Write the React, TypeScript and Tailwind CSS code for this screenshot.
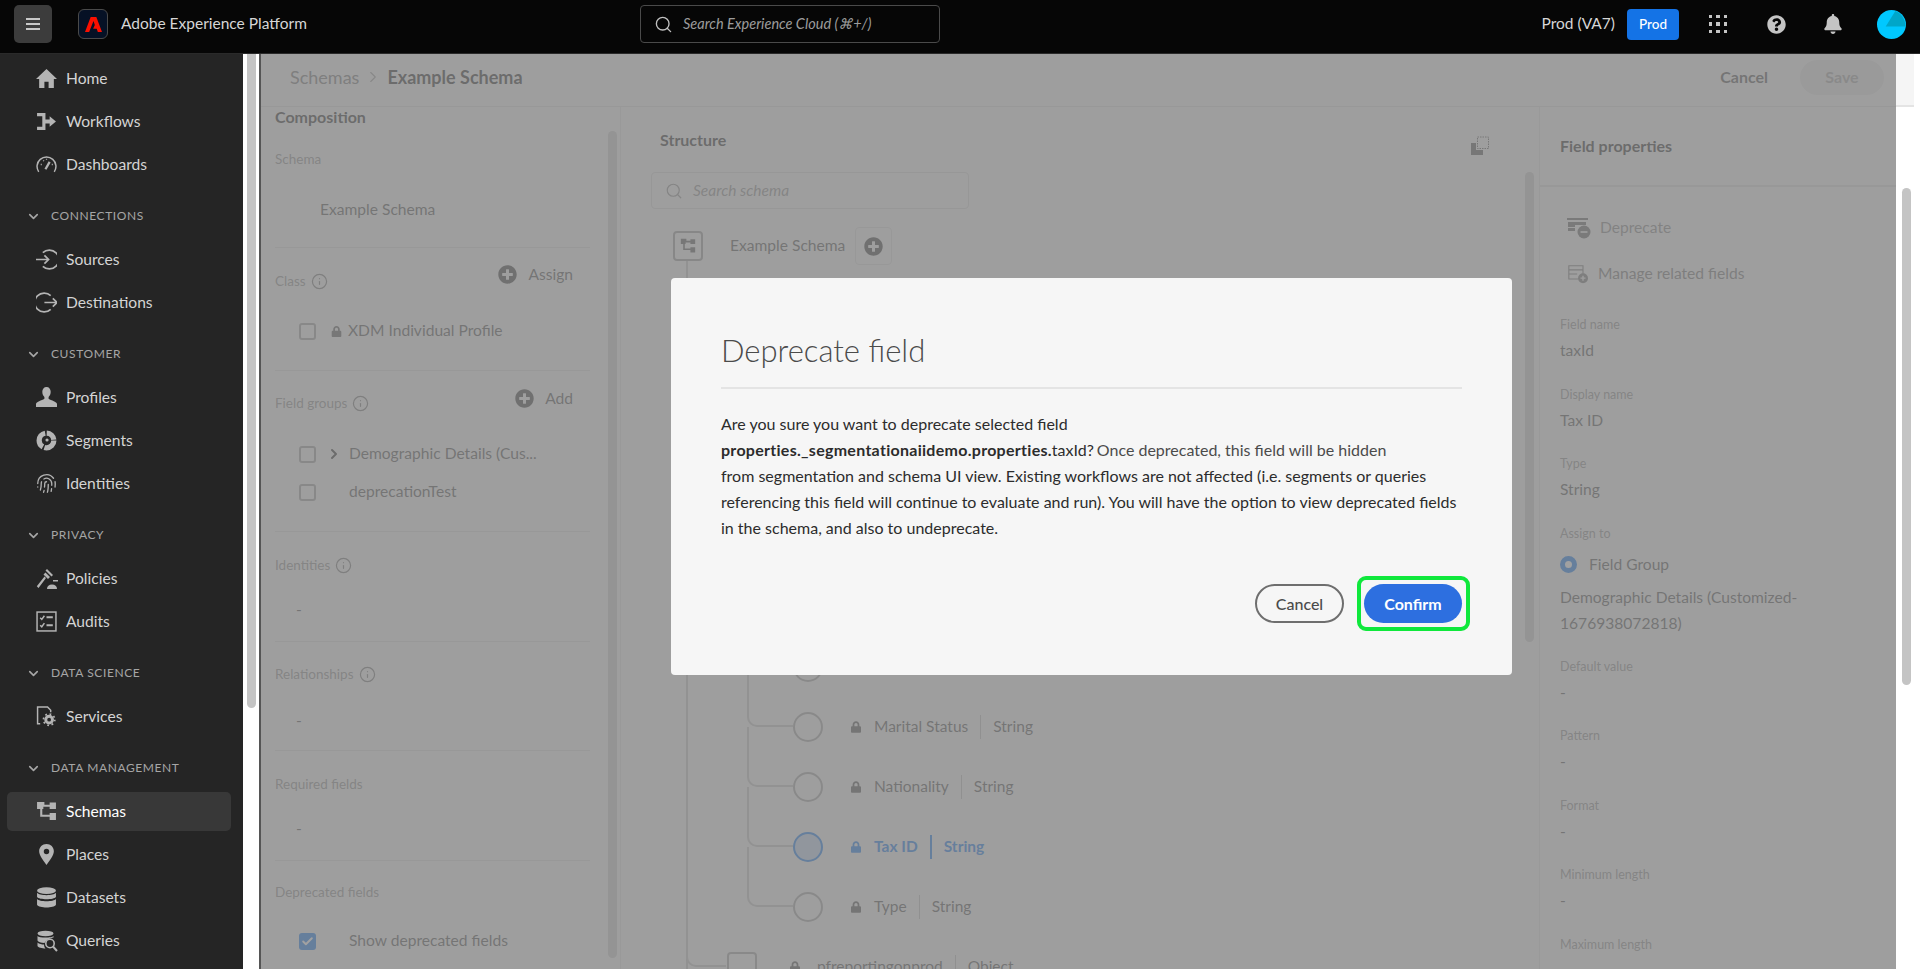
import { ChevronDown, ChevronRight, Check, Fingerprint, Info, Search } from "lucide-react";
import { FaBell, FaLock, FaPlusCircle, FaQuestionCircle } from "react-icons/fa";
import type { ReactNode } from "react";

const ic = "w-[21px] h-[21px] shrink-0";

const HomeIcon = () => (
  <svg viewBox="0 0 20 20" className={ic} fill="currentColor"><path d="M10 1 20 10.5H17V19H12V13H8V19H3V10.5H0Z" /></svg>
);
const WorkflowIcon = () => (
  <svg viewBox="0 0 20 20" className={ic} fill="currentColor"><path d="M1 2H9V8H13V5L19 10 13 15V12H9V18H1V15H6V5H1Z" /></svg>
);
const GaugeIcon = () => (
  <svg viewBox="0 0 20 20" className={ic} fill="none" stroke="currentColor" strokeWidth="1.4">
    <path d="M2.6 17A9 9 0 1 1 17.4 17" />
    <path d="M9 14.5 13 7.5" strokeWidth="2.2" />
    <path d="M4.5 10h1M7 6l.5.8M10 4.5v1M15 10h1" strokeWidth="1.2" />
  </svg>
);
const SourcesIcon = () => (
  <svg viewBox="0 0 20 20" className={ic} fill="none" stroke="currentColor" strokeWidth="1.6">
    <path d="M6.5 3.5A9 9 0 1 1 6.5 16.5" />
    <path d="M0 10H12M8 6l4 4-4 4" />
  </svg>
);
const DestIcon = () => (
  <svg viewBox="0 0 20 20" className={ic} fill="none" stroke="currentColor" strokeWidth="1.6">
    <path d="M14 3.5A9 9 0 1 0 14 16.5" />
    <path d="M8 10H20M16 6l4 4-4 4" />
  </svg>
);
const ProfileIcon = () => (
  <svg viewBox="0 0 20 20" className={ic} fill="currentColor">
    <path d="M10 0C7.5 0 6 2 6 4.6 6 7 7 8.6 8 9.6V11.2C8 12 1 13.4 0 16V19H20V16C19 13.4 12 12 12 11.2V9.6C13 8.6 14 7 14 4.6 14 2 12.5 0 10 0Z" />
  </svg>
);
const SegmentsIcon = () => (
  <svg viewBox="0 0 20 20" className={ic} fill="none" stroke="currentColor">
    <circle cx="10" cy="10" r="7" strokeWidth="5" strokeDasharray="13 1.5 17 1.5 10 1.5" />
    <circle cx="10.5" cy="9.5" r="1.5" fill="currentColor" strokeWidth="0" />
  </svg>
);
const PoliciesIcon = () => (
  <svg viewBox="0 0 22 22" className="w-[22px] h-[22px] shrink-0" fill="currentColor">
    <path d="M11 1 17 7 15.5 8.5 9.5 2.5ZM9.5 4.5 14 9 12 11 7.5 6.5ZM8.5 8.5 10 10 2.5 20 0.8 18.3Z" />
    <path d="M11 21C11 18 13 16.5 16 16.5S21 18 21 21ZM17 12h5v1.6h-5Z" />
  </svg>
);
const AuditsIcon = () => (
  <svg viewBox="0 0 20 20" className={ic} fill="none" stroke="currentColor" strokeWidth="1.4">
    <rect x="1" y="1" width="18" height="18" />
    <path d="M4 6.5 5.5 8 8 4.5M4 13.5 5.5 15 8 11.5" />
    <path d="M10 6h6M10 13.5h6" strokeWidth="2" />
  </svg>
);
const ServicesIcon = () => (
  <svg viewBox="0 0 20 20" className={ic} fill="none" stroke="currentColor" strokeWidth="1.4">
    <path d="M4 17H1.5V1H11L14 4V6" />
    <circle cx="12.5" cy="13" r="3.2" strokeWidth="2.8" />
    <circle cx="12.5" cy="13" r="5.4" strokeWidth="1.6" strokeDasharray="1.7 2.5" />
  </svg>
);
const SchemaIcon = ({ className = ic }: { className?: string }) => (
  <svg viewBox="0 0 20 20" className={className} fill="currentColor">
    <path d="M1 1H8V3.5H13V1.5H19V7.5H13V5.5H7V7.5H6V13H13V11.5H19V18H13V15H4V7.5H1Z" />
  </svg>
);
const PlacesIcon = () => (
  <svg viewBox="0 0 20 20" className={ic} fill="currentColor" fillRule="evenodd">
    <path d="M10 0C6 0 3 3 3 7 3 11 7 16 10 20 13 16 17 11 17 7 17 3 14 0 10 0ZM10 4.5A2.6 2.6 0 1 1 10 9.7 2.6 2.6 0 0 1 10 4.5Z" />
  </svg>
);
const DatasetsIcon = () => (
  <svg viewBox="0 0 20 20" className={ic} fill="currentColor">
    <ellipse cx="10" cy="3.5" rx="9" ry="3.2" />
    <path d="M1 5.5C3 8.5 17 8.5 19 5.5V9.5C17 12.3 3 12.3 1 9.5ZM1 11.5C3 14.3 17 14.3 19 11.5V17C17 20.5 3 20.5 1 17Z" />
  </svg>
);
const QueriesIcon = () => (
  <svg viewBox="0 0 22 22" className="w-[22px] h-[22px] shrink-0" fill="none" stroke="currentColor">
    <ellipse cx="9.5" cy="3.5" rx="8" ry="2.7" fill="currentColor" strokeWidth="0" />
    <path d="M1.5 6C3 8 16 8 17.5 6V7.5C14 8 10 10 8.5 13 5 13 2 12 1.5 10.5ZM1.5 12.5C3 14 6 14.5 8 14.5 8 16 8.5 17.5 9.5 18.5 6 18.5 2 17.5 1.5 16Z" fill="currentColor" strokeWidth="0" />
    <circle cx="14" cy="13.5" r="4.2" strokeWidth="1.6" />
    <path d="M17 16.5 21 21" strokeWidth="2" />
  </svg>
);
const FingerIcon = () => <Fingerprint className={ic} strokeWidth={1.5} />;

type NavItem = { label: string; icon: ReactNode; active?: boolean };
type NavGroup = { title?: string; items: NavItem[] };

const nav: NavGroup[] = [
  {
    items: [
      { label: "Home", icon: <HomeIcon /> },
      { label: "Workflows", icon: <WorkflowIcon /> },
      { label: "Dashboards", icon: <GaugeIcon /> },
    ],
  },
  {
    title: "Connections",
    items: [
      { label: "Sources", icon: <SourcesIcon /> },
      { label: "Destinations", icon: <DestIcon /> },
    ],
  },
  {
    title: "Customer",
    items: [
      { label: "Profiles", icon: <ProfileIcon /> },
      { label: "Segments", icon: <SegmentsIcon /> },
      { label: "Identities", icon: <FingerIcon /> },
    ],
  },
  {
    title: "Privacy",
    items: [
      { label: "Policies", icon: <PoliciesIcon /> },
      { label: "Audits", icon: <AuditsIcon /> },
    ],
  },
  { title: "Data Science", items: [{ label: "Services", icon: <ServicesIcon /> }] },
  {
    title: "Data Management",
    items: [
      { label: "Schemas", icon: <SchemaIcon />, active: true },
      { label: "Places", icon: <PlacesIcon /> },
      { label: "Datasets", icon: <DatasetsIcon /> },
      { label: "Queries", icon: <QueriesIcon /> },
    ],
  },
];

const Header = () => (
  <header className="h-[54px] shrink-0 bg-[#060606] border-b border-[#2a2a2a] pb-[5px] flex items-center relative z-20">
    <button className="ml-[14px] w-[38px] h-[38px] rounded-[5px] bg-[#3c3c3c] flex flex-col items-center justify-center gap-[3px]">
      <span className="block w-[14px] h-[2px] bg-[#c8c8c8]" />
      <span className="block w-[14px] h-[2px] bg-[#c8c8c8]" />
      <span className="block w-[14px] h-[2px] bg-[#c8c8c8]" />
    </button>
    <div className="ml-[26px] w-[30px] h-[30px] rounded-[6px] bg-[#061125] border border-[#4a4a4a] flex items-center justify-center">
      <svg viewBox="0 0 18 18" className="w-[17px] h-[17px]" fill="#fa0f00">
        <path d="M6 1H12L18 17H13.6L12.4 13.4H8.6L10.4 9.6 9 5.4 4.4 17H0Z" />
      </svg>
    </div>
    <span className="ml-[13px] text-[15.5px] text-[#d6d6d6] w-[519px]">Adobe Experience Platform</span>
    <div className="w-[300px] h-[38px] rounded-[4px] border border-[#4a4a4a] flex items-center pl-[13px] gap-[10px] text-[#9c9c9c]">
      <Search className="w-[19px] h-[19px] text-[#c0c0c0]" strokeWidth={1.7} />
      <span className="italic text-[14.5px]">Search Experience Cloud (⌘+/)</span>
    </div>
    <span className="ml-auto text-[15.5px] text-[#d6d6d6]">Prod (VA7)</span>
    <span className="ml-[12px] w-[52px] h-[31px] rounded-[4px] bg-[#1473e6] text-white text-[13.5px] font-medium flex items-center justify-center">Prod</span>
    <div className="ml-[30px] w-[18px] h-[18px] grid grid-cols-3 gap-[4px]">
      {Array.from({ length: 9 }).map((_, i) => (
        <span key={i} className="block bg-[#c4c4c4]" />
      ))}
    </div>
    <FaQuestionCircle className="ml-[40px] w-[19px] h-[19px] text-[#c4c4c4]" />
    <FaBell className="ml-[38px] w-[18px] h-[20px] text-[#c4c4c4]" />
    <svg viewBox="0 0 30 30" className="ml-[35px] mr-[14px] w-[29px] h-[29px]">
      <circle cx="15" cy="15" r="15" fill="#00c8ff" />
      <path d="M9 17 19 1C25 3 29 9 29.6 17Z" fill="#00a6c9" />
    </svg>
  </header>
);

const Sidebar = () => (
  <nav className="w-[243px] shrink-0 bg-[#252525] pt-[3px] overflow-hidden">
    {nav.map((group, i) => (
      <div key={i}>
        {group.title && (
          <div className="h-[22px] mt-[19px] mb-[11px] flex items-center pl-[26px] text-[#a6a6a6]">
            <ChevronDown className="w-[15px] h-[15px]" strokeWidth={2.6} />
            <span className="ml-[10px] text-[12px] uppercase tracking-[0.05em]">{group.title}</span>
          </div>
        )}
        {group.items.map((item) => (
          <div key={item.label} className="h-[43px] py-[2px] pl-[7px]">
            <div
              className={
                item.active
                  ? "w-[224px] h-[39px] rounded-[5px] bg-[#383838] flex items-center pl-[29px] gap-[9px] text-white"
                  : "w-[224px] h-[39px] flex items-center pl-[29px] gap-[9px] text-[#d4d4d4]"
              }
            >
              <span className="text-[#b4b4b4] flex w-[21px]">{item.icon}</span>
              <span className="text-[15.6px]">{item.label}</span>
            </div>
          </div>
        ))}
      </div>
    ))}
  </nav>
);

const Checkbox = ({ checked }: { checked?: boolean }) =>
  checked ? (
    <span className="w-[17px] h-[17px] rounded-[3px] bg-[#2680eb] flex items-center justify-center shrink-0">
      <Check className="w-[13px] h-[13px] text-white" strokeWidth={3.5} />
    </span>
  ) : (
    <span className="w-[17px] h-[17px] rounded-[3px] border-2 border-[#a4a4a4] shrink-0" />
  );

const Label = ({ children, info }: { children: string; info?: boolean }) => (
  <div className="h-[20px] flex items-center gap-[5px] text-[13.5px] text-[#969696]">
    {children}
    {info && <Info className="w-[17px] h-[17px] text-[#808080]" strokeWidth={1.7} />}
  </div>
);

const AddAction = ({ children }: { children: string }) => (
  <div className="flex items-center gap-[11px] text-[15.6px] text-[#5e5e5e]">
    <FaPlusCircle className="w-[19px] h-[19px] text-[#4a4a4a]" />
    {children}
  </div>
);

const Composition = () => (
  <aside className="w-[360px] shrink-0 flex pl-[14px] border-r border-[#e0e0e0]">
    <div className="w-[315px] shrink-0 text-[15.6px] text-[#5e5e5e]">
      <section className="h-[141px] border-b border-[#dcdcdc]">
        <h3 className="h-[20px] leading-[20px] text-[16px] font-bold text-[#3c3c3c]">Composition</h3>
        <div className="mt-[22px]"><Label>Schema</Label></div>
        <div className="mt-[30px] h-[20px] leading-[20px] ml-[45px]">Example Schema</div>
      </section>
      <section className="h-[123px] border-b border-[#dcdcdc] pt-[23px]">
        <div className="flex items-start justify-between pr-[17px]">
          <Label info>Class</Label>
          <div className="-mt-[8px]"><AddAction>Assign</AddAction></div>
        </div>
        <div className="mt-[30px] h-[20px] flex items-center pl-[24px]">
          <Checkbox />
          <FaLock className="ml-[15px] w-[11px] h-[11px] text-[#666666]" />
          <span className="ml-[6px]">XDM Individual Profile</span>
        </div>
      </section>
      <section className="h-[161px] border-b border-[#dcdcdc] pt-[22px]">
        <div className="flex items-start justify-between pr-[17px]">
          <Label info>Field groups</Label>
          <div className="-mt-[6px]"><AddAction>Add</AddAction></div>
        </div>
        <div className="mt-[31px] h-[20px] flex items-center pl-[24px]">
          <Checkbox />
          <ChevronRight className="ml-[10px] w-[16px] h-[16px] text-[#3c3c3c]" strokeWidth={3} />
          <span className="ml-[7px]">Demographic Details (Cus...</span>
        </div>
        <div className="mt-[18px] h-[20px] flex items-center pl-[24px]">
          <Checkbox />
          <span className="ml-[33px]">deprecationTest</span>
        </div>
      </section>
      <section className="h-[110px] border-b border-[#dcdcdc] pt-[23px]">
        <Label info>Identities</Label>
        <div className="mt-[24px] h-[20px] leading-[20px] pl-[21px]">-</div>
      </section>
      <section className="h-[109px] border-b border-[#dcdcdc] pt-[22px]">
        <Label info>Relationships</Label>
        <div className="mt-[26px] h-[20px] leading-[20px] pl-[21px]">-</div>
      </section>
      <section className="h-[110px] border-b border-[#dcdcdc] pt-[23px]">
        <Label>Required fields</Label>
        <div className="mt-[24px] h-[20px] leading-[20px] pl-[21px]">-</div>
      </section>
      <section className="pt-[21px]">
        <Label>Deprecated fields</Label>
        <div className="mt-[29px] h-[20px] flex items-center pl-[24px]">
          <Checkbox checked />
          <span className="ml-[33px]">Show deprecated fields</span>
        </div>
      </section>
    </div>
    <div className="ml-[18px] mt-[24px] w-[9px] h-[827px] rounded-full bg-[#cecece]" />
  </aside>
);

type FieldRow = { label?: string; selected?: boolean };
const fieldRows: FieldRow[] = [
  {},
  { label: "Marital Status" },
  { label: "Nationality" },
  { label: "Tax ID", selected: true },
  { label: "Type" },
];

const Leaf = ({ label, selected }: FieldRow) => (
  <div className="relative h-[60px] flex items-center pl-[142px]">
    <span className="absolute left-[96px] -top-[30px] w-[46px] h-[60px] border-l-2 border-b-2 border-[#c6c6c6] rounded-bl-[10px]" />
    <span
      className={
        selected
          ? "w-[30px] h-[30px] rounded-full border-2 border-[#2680eb] bg-[#c4d6ee]"
          : "w-[30px] h-[30px] rounded-full border-2 border-[#a8a8a8]"
      }
    />
    {label && (
      <div
        className={
          selected
            ? "ml-[28px] flex items-center text-[15.5px] font-bold text-[#2680eb]"
            : "ml-[28px] flex items-center text-[15.5px] text-[#5e5e5e]"
        }
      >
        <FaLock className="w-[10px] h-[12px] mr-[13px]" />
        <span>{label}</span>
        <span className={selected ? "mx-[12px] w-[2px] h-[24px] bg-[#2680eb]" : "mx-[12px] w-px h-[24px] bg-[#c0c0c0]"} />
        <span>String</span>
      </div>
    )}
  </div>
);

const Structure = () => (
  <main className="flex-1 min-w-0 flex pl-[30px] pr-[5px] border-r border-[#e0e0e0] relative">
    <div className="flex-1 min-w-0">
      <div className="flex items-center justify-between pt-px h-[65px] pr-[35px]">
        <h3 className="ml-[9px] text-[16px] font-bold text-[#3c3c3c]">Structure</h3>
        <svg viewBox="0 0 20 20" className="w-[20px] h-[20px] mt-[12px] text-[#666666]">
          <path d="M1 7H6V14H13V19H1Z" fill="currentColor" />
          <rect x="7.5" y="1" width="11" height="11.5" fill="none" stroke="currentColor" strokeDasharray="1.5 1" />
        </svg>
      </div>
      <div className="w-[318px] h-[37px] rounded-[4px] border border-[#d8d8d8] flex items-center pl-[13px] gap-[10px] text-[#969696]">
        <Search className="w-[18px] h-[18px]" strokeWidth={1.6} />
        <span className="italic text-[15.5px]">Search schema</span>
      </div>
      <div className="relative mt-[18px]">
        <span className="absolute left-[35px] top-[34px] bottom-0 w-[2px] bg-[#c6c6c6]" />
        <div className="h-[38px] flex items-center pl-[22px]">
          <span className="w-[30px] h-[30px] rounded-[4px] border-2 border-[#a0a0a0] flex items-center justify-center text-[#666666]">
            <SchemaIcon className="w-[16px] h-[16px]" />
          </span>
          <span className="ml-[27px] text-[15.6px] text-[#5e5e5e]">Example Schema</span>
          <span className="ml-[10px] w-[37px] h-[38px] rounded-[4px] border border-[#dcdcdc] flex items-center justify-center">
            <FaPlusCircle className="w-[19px] h-[19px] text-[#4a4a4a]" />
          </span>
        </div>
        {/* rows behind the dialog */}
        <div className="h-[372px]" />
        {fieldRows.map((row, i) => (
          <Leaf key={i} {...row} />
        ))}
        <div className="relative h-[60px] flex items-center pl-[76px]">
          <span className="absolute left-[35px] -top-[30px] w-[40px] h-[60px] border-l-2 border-b-2 border-[#c6c6c6] rounded-bl-[10px]" />
          <span className="w-[30px] h-[30px] rounded-[4px] border-2 border-[#a8a8a8]" />
          <FaLock className="ml-[33px] w-[10px] h-[12px] text-[#5e5e5e]" />
          <span className="ml-[17px] text-[15.5px] text-[#5e5e5e]">pfreportingonprod</span>
          <span className="mx-[12px] w-px h-[24px] bg-[#c0c0c0]" />
          <span className="text-[15.5px] text-[#5e5e5e]">Object</span>
        </div>
      </div>
    </div>
    <div className="mt-[65px] w-[9px] h-[470px] rounded-full bg-[#cecece]" />
  </main>
);

const Prop = ({ label, value }: { label: string; value: string }) => (
  <div className="mb-[25.5px]">
    <div className="h-[18px] leading-[18px] text-[12.5px] text-[#969696]">{label}</div>
    <div className="mt-[6px] h-[20px] leading-[20px] text-[15.6px] text-[#5e5e5e]">{value}</div>
  </div>
);

const FieldProperties = () => (
  <aside className="w-[356px] shrink-0">
    <div className="h-[80px] border-b-2 border-[#dcdcdc] pl-[20px] pt-[29px] text-[16px] font-bold text-[#3c3c3c] leading-[20px]">Field properties</div>
    <div className="pl-[20px]">
      <div className="mt-[31px] h-[20px] flex items-center text-[15.6px] text-[#8e8e8e]">
        <svg viewBox="0 0 24 22" className="ml-[7px] w-[24px] h-[22px] text-[#6e6e6e]" fill="currentColor">
          <path d="M0 1H21V3H0ZM1 5H19V8H8V10H1ZM1 11H8V14H1Z" />
          <circle cx="17" cy="15" r="6.5" />
          <path d="M13.5 14.2H20.5V15.8H13.5Z" fill="#f5f5f5" />
        </svg>
        <span className="ml-[9px]">Deprecate</span>
      </div>
      <div className="mt-[26px] h-[20px] flex items-center text-[15.6px] text-[#7e7e7e]">
        <svg viewBox="0 0 24 22" className="ml-[8px] w-[20px] h-[20px] text-[#7e7e7e]" fill="none" stroke="currentColor" strokeWidth="1.3">
          <path d="M12 17H1V1H18V11M1 6H18M1 11H11" />
          <circle cx="18" cy="16" r="6" fill="currentColor" strokeWidth="0" />
          <path d="M15 16H21M18 13V19" stroke="#f5f5f5" strokeWidth="1.6" />
        </svg>
        <span className="ml-[10px]">Manage related fields</span>
      </div>
      <div className="mt-[32px]">
        <Prop label="Field name" value="taxId" />
        <Prop label="Display name" value="Tax ID" />
        <Prop label="Type" value="String" />
        <div className="h-[18px] leading-[18px] text-[12.5px] text-[#969696]">Assign to</div>
        <div className="mt-[12px] h-[20px] flex items-center text-[15.6px] text-[#5e5e5e]">
          <span className="w-[17px] h-[17px] rounded-full border-[5px] border-[#2680eb] bg-white" />
          <span className="ml-[12px]">Field Group</span>
        </div>
        <div className="mt-[9px] leading-[26px] text-[15.6px] text-[#5e5e5e] w-[300px]">
          Demographic Details (Customized-
          <br />
          1676938072818)
        </div>
        <div className="mt-[22px]">
          <Prop label="Default value" value="-" />
          <Prop label="Pattern" value="-" />
          <Prop label="Format" value="-" />
          <Prop label="Minimum length" value="-" />
          <Prop label="Maximum length" value="-" />
        </div>
      </div>
    </div>
  </aside>
);

const Dialog = () => (
  <div className="absolute left-[410px] top-[224px] w-[841px] h-[397px] rounded-[4px] bg-[#f6f6f6] px-[50px] pt-[49px] z-20">
    <h2 className="h-[46px] leading-[46px] text-[31px] font-light text-[#4b4b4b]">Deprecate field</h2>
    <div className="mt-[14px] h-[2px] bg-[#e4e4e4]" />
    <p className="mt-[22px] text-[16px] leading-[26px] text-[#2c2c2c] whitespace-nowrap">
      Are you sure you want to deprecate selected field
      <br />
      <b className="tracking-[0.28px]">properties._segmentationaiidemo.properties.</b>taxId?<span className="text-[#4b4b4b] ml-[3px]">Once deprecated, this field will be hidden</span>
      <br />
      from segmentation and schema UI view. Existing workflows are not affected (i.e. segments or queries
      <br />
      referencing this field will continue to evaluate and run). You will have the option to view deprecated fields
      <br />
      in the schema, and also to undeprecate.
    </p>
    <div className="mt-[43px] flex justify-end items-center gap-[20px]">
      <button className="w-[89px] h-[39px] rounded-full border-2 border-[#6e6e6e] text-[16px] font-medium text-[#4b4b4b]">Cancel</button>
      <div className="relative">
        <button className="w-[98px] h-[39px] rounded-full bg-[#2d6fe0] text-[16px] font-bold text-white block">Confirm</button>
        <span className="absolute -left-[7px] -top-[8px] -right-[8px] -bottom-[8px] rounded-[9px] border-[4px] border-[#0fe83c]" />
      </div>
    </div>
  </div>
);

export default function App() {
  return (
    <div className="h-screen w-full overflow-hidden flex flex-col bg-white" style={{ fontFamily: "Lato, 'Noto Sans', sans-serif" }}>
      <Header />
      <div className="flex-1 min-h-0 flex">
        <Sidebar />
        <div className="w-[18px] shrink-0 bg-white border-r-2 border-[#555555] pl-[4px]">
          <div className="w-[9px] h-[654px] rounded-b-full bg-[#c4c4c4]" />
        </div>
        <div className="relative flex-1 min-w-0 flex flex-col bg-[#f5f5f5] overflow-hidden">
          <div className="h-[53px] shrink-0 border-b border-[#dcdcdc] pb-[6px] flex items-center pl-[29px] pr-[12px]">
            <span className="text-[18px] text-[#808080]">Schemas</span>
            <ChevronRight className="mx-[5px] w-[18px] h-[18px] text-[#a0a0a0]" strokeWidth={1.5} />
            <span className="text-[18px] font-bold text-[#3c3c3c]">Example Schema</span>
            <span className="ml-auto text-[16px] font-bold text-[#5e5e5e]">Cancel</span>
            <span className="ml-[32px] w-[84px] h-[35px] rounded-full bg-[#e4e4e4] flex items-center justify-center text-[16px] font-bold text-[#a8a8a8]">Save</span>
          </div>
          <div className="flex-1 min-h-0 flex">
            <Composition />
            <Structure />
            <FieldProperties />
          </div>
          <div className="absolute inset-0 bg-[#7e7e7e]/73 z-10" />
          <Dialog />
        </div>
        <div className="w-[24px] shrink-0 bg-white">
          <div className="h-[53px] bg-[#f5f5f5] border-b-2 border-[#e4e4e4] mr-[6px]" />
          <div className="ml-[6px] mt-[81px] w-[9px] h-[497px] rounded-full bg-[#c4c4c4]" />
        </div>
      </div>
    </div>
  );
}
